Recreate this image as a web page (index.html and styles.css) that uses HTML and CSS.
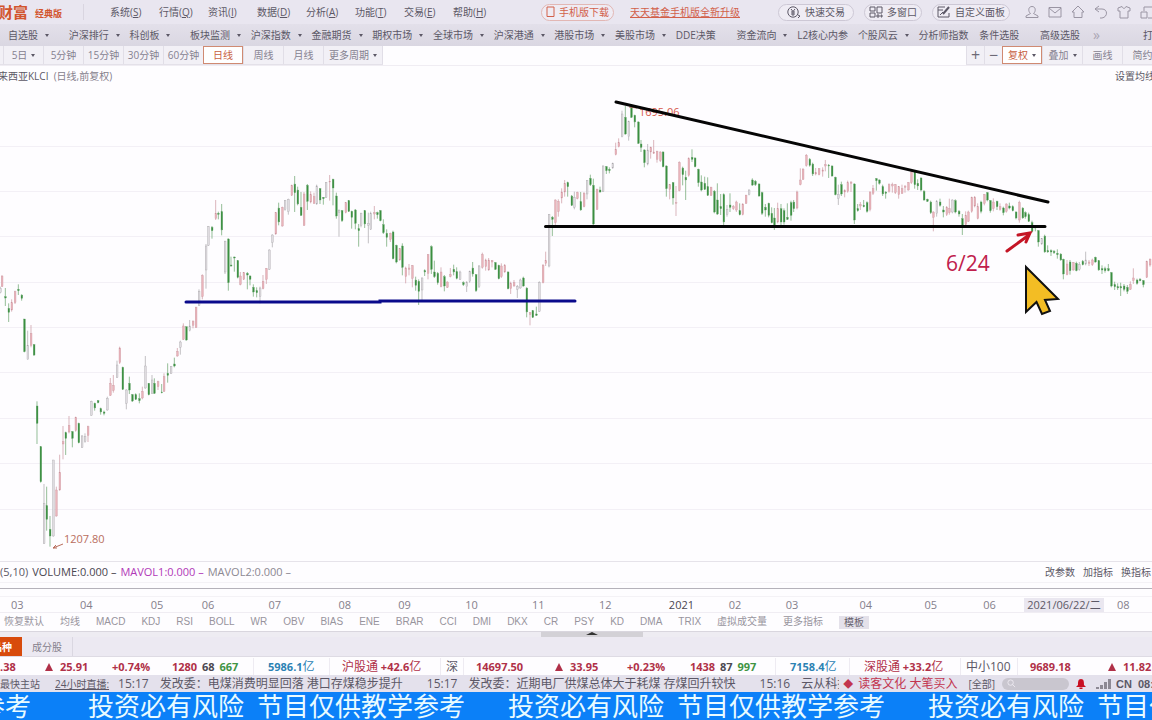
FILE: index.html
```html
<!DOCTYPE html>
<html lang="zh-CN">
<head>
<meta charset="utf-8">
<title>财富经典版 - KLCI</title>
<link rel="stylesheet" href="styles.css">
</head>
<body>
<div class="app">
  <header class="topbar">
    <div class="brand"><strong class="brand-name">财富</strong><span class="brand-edition">经典版</span></div>
    <nav class="menu">
      <button>系统(<u>S</u>)</button><button>行情(<u>Q</u>)</button><button>资讯(<u>I</u>)</button><button>数据(<u>D</u>)</button><button>分析(<u>A</u>)</button><button>功能(<u>T</u>)</button><button>交易(<u>E</u>)</button><button>帮助(<u>H</u>)</button>
    </nav>
    <div class="promo">
      <button class="pill pill-red"><svg class="ic-phone" viewBox="0 0 9 12"><path d="M1 1h7v9.500H1zM3 10.500h3"/></svg>手机版下载</button>
      <a class="promo-link" href="#">天天基金手机版全新升级</a>
    </div>
    <div class="actions">
      <button class="pill"><svg viewBox="0 0 14 12"><circle cx="6" cy="6" r="5.200"/><path d="M4 3l2 2.500L8 3M6 5.500V10M4 6h4M4 8h4M11 9l2 1-2 2"/></svg>快速交易</button>
      <button class="pill"><svg viewBox="0 0 14 12"><path d="M1 1h5v4H1zM8 1h5v6H8zM1 7h5v4H1zM8 9h2v2H8zM12 9h1v2h-1z"/></svg>多窗口</button>
      <button class="pill"><svg viewBox="0 0 14 12"><path d="M8 1H1v10h11V7M1 4h5M3 9l3-3"/><path class="thick" d="M6 8l6-7"/></svg>自定义面板</button>
    </div>
    <div class="tools">
      <button aria-label="用户"><svg viewBox="0 0 14 14"><path d="M7 1.500c-4 0-4 5-1.500 7L1 11v1.500h12V11L8.500 8.500C11 6.500 11 1.500 7 1.500z"/></svg></button>
      <button aria-label="邮件"><svg viewBox="0 0 14 14"><path d="M1 2.500h12v9.500H1zM1 3l6 5 6-5"/></svg></button>
      <button aria-label="主页"><svg viewBox="0 0 14 14"><path d="M7 1L1 7h2v5.500h8V7h2z"/></svg></button>
      <button aria-label="撤销"><svg viewBox="0 0 14 14"><path d="M5 1L1 4l4 3M1 4h7c6 0 6 8 0 9H6"/></svg></button>
      <button aria-label="皮肤"><svg viewBox="0 0 14 14"><path d="M5 1.500L1 3v3h2v7h8V6h2V3L9 1.500C8 4 6 4 5 1.500z"/></svg></button>
      <button aria-label="窗口"><svg viewBox="0 0 14 14"><path d="M4 6V2h9v11H8M1 7h6v6H1z"/></svg></button>
    </div>
  </header>

  <nav class="markets">
    <button class="drop">自选股</button><button class="drop">沪深排行</button><button class="drop">科创板</button><button class="drop">板块监测</button><button class="drop">沪深指数</button><button class="drop">金融期货</button><button class="drop">期权市场</button><button class="drop">全球市场</button><button class="drop">沪深港通</button><button class="drop">港股市场</button><button class="drop">美股市场</button><button>DDE决策</button><button class="drop">资金流向</button><button>L2核心内参</button><button class="drop">个股风云</button><button>分析师指数</button><button>条件选股</button><button>高级选股</button><button class="more">»</button><button>打开</button>
  </nav>

  <div class="periods">
    <div class="tabs">
      <button class="drop">5日</button><button>5分钟</button><button>15分钟</button><button>30分钟</button><button>60分钟</button><button class="active">日线</button><button>周线</button><button>月线</button><button class="drop wide">更多周期</button>
    </div>
    <div class="tabs tabs-right">
      <button class="zoom-btn">+</button><button class="zoom-btn">−</button><button class="drop active">复权</button><button class="drop">叠加</button><button>画线</button><button>简约</button>
    </div>
  </div>

  <main class="chart">
    <div class="chart-head"><span class="symbol">来西亚KLCI&nbsp; <small>(日线,前复权)</small></span><a href="#" class="setting">设置均线</a></div>
    <svg class="plot" viewBox="0 86 1152 475" role="img" aria-label="KLCI 日线">
      <g class="grid" id="grid"></g>
      <g id="candles"></g>
      <path class="tip" d="M63 544l-10 4m3-3l-3 3h4"/>
      <text class="low" x="64" y="543">1207.80</text>
      <text class="high" x="639" y="116">1695.06</text>
      <path class="tip" d="M637 108l-8-1"/>
      <path class="support" d="M186 302H380V301H575"/>
      <path class="trend" d="M616 102L1048 202M545.500 226.500H1045"/>
      <path class="arrow" d="M1007 251L1029 235M1018 235L1030 233L1026 242"/>
      <text class="mark" x="946" y="271">6/24</text>
      <path class="cursor" d="M1026 267L1058 299L1045 300L1050 311L1042 314L1036.500 302L1026 312Z"/>
    </svg>
  </main>

  <section class="volume">
    <div class="volume-head">
      <span>(5,10)</span><span class="vol">VOLUME:0.000 –</span><span class="ma1">MAVOL1:0.000 –</span><span class="ma2">MAVOL2:0.000 –</span>
      <span class="volume-links"><a href="#">改参数</a><a href="#">加指标</a><a href="#">换指标</a></span>
    </div>
  </section>
  <div class="axis">
    <span>03</span><span>04</span><span>05</span><span>06</span><span>07</span><span>08</span><span>09</span><span>10</span><span>11</span><span>12</span><span class="year">2021</span><span>02</span><span>03</span><span>04</span><span>05</span><span>06</span><span class="today">2021/06/22/二</span><span>08</span>
  </div>
  <nav class="indicators">
    <button>恢复默认</button><button>均线</button><button>MACD</button><button>KDJ</button><button>RSI</button><button>BOLL</button><button>WR</button><button>OBV</button><button>BIAS</button><button>ENE</button><button>BRAR</button><button>CCI</button><button>DMI</button><button>DKX</button><button>CR</button><button>PSY</button><button>KD</button><button>DMA</button><button>TRIX</button><button>虚拟成交量</button><button>更多指标</button><button class="template">模板</button>
  </nav>
  <div class="splitter"><button class="handle" aria-label="展开"><svg viewBox="0 0 12 4"><path d="M0 3L6 0l6 3z"/></svg></button></div>
  <div class="related"><button class="current"><span>品种</span></button><button>成分股</button></div>

  <div class="quotes">
    <b>.38</b>
    <b><i class="up"></i>25.91</b>
    <b>+0.74%</b>
    <b>1280 <em class="flat">68</em> <em class="down">667</em></b>
    <b class="sep amount">5986.1<span>亿</span></b>
    <b class="sep north"><span>沪股通</span> +42.6<span>亿</span></b>
    <b class="sep name">深</b>
    <b class="sep north">14697.50</b>
    <b><i class="up"></i>33.95</b>
    <b>+0.23%</b>
    <b>1438 <em class="flat">87</em> <em class="down">997</em></b>
    <b class="sep amount">7158.4<span>亿</span></b>
    <b class="sep amount red"><span>深股通</span> +33.2<span>亿</span></b>
    <b class="sep name">中小100</b>
    <b class="sep north">9689.18</b>
    <b><i class="up"></i>11.82</b>
  </div>

  <div class="news">
    <span class="station">最快主站</span>
    <a class="live" href="#">24小时直播:</a>
    <div class="ticker">
      <span class="item"><time>15:17</time>发改委：电煤消费明显回落 港口存煤稳步提升</span>
      <span class="item"><time>15:17</time>发改委：近期电厂供煤总体大于耗煤 存煤回升较快</span>
      <span class="item"><time>15:16</time>云从科技</span>
    </div>
    <span class="alert"><i>◆</i>读客文化 大笔买入</span>
    <span class="all">[全部]</span>
    <label class="search"><svg viewBox="0 0 10 10"><circle cx="4" cy="4" r="3"/><path d="M6 6l3 3"/></svg><input type="text" aria-label="搜索"></label>
    <svg class="bell" viewBox="0 0 10 10"><path d="M5 0C2 0 2 3 2 6L0 8h10L8 6C8 3 8 0 5 0zM3.500 8.500h3V10h-3z"/></svg>
    <svg class="signal" viewBox="0 0 15 10"><path d="M0 8h3v2H0zM4 6h3v4H4z"/><path d="M8 3h3v7H8zM12 0h3v10h-3z"/></svg>
    <b class="clock">CN&nbsp; 08:18</b>
  </div>

  <footer class="banner">
    <span class="banner-tail">学参考</span><span>投资必有风险&ensp;节目仅供教学参考</span><span>投资必有风险&ensp;节目仅供教学参考</span><span>投资必有风险&ensp;节目仅供教学参考</span>
  </footer>
</div>
<script src="chart.js"></script>
</body>
</html>
```
FILE: styles.css
```css
* { box-sizing: border-box; }
body {
  margin: 0;
  background: #fefdff;
  color: #5c5866;
  font: 10px/16px "Open Sans", "Noto Sans CJK SC", sans-serif;
  overflow: hidden;
}
button {
  border: 0;
  padding: 0;
  background: none;
  color: inherit;
  font: inherit;
  white-space: nowrap;
  text-align: left;
}
a { color: inherit; text-decoration: none; }
svg { fill: none; stroke: currentColor; flex: none; }
.app { display: flex; flex-direction: column; min-height: 100vh; white-space: nowrap; }

.topbar { display: flex; align-items: center; height: 24px; background: #e9e6f0; overflow: hidden; }
.brand { display: flex; align-items: center; gap: 7px; width: 84px; height: 16px; border-right: 1px solid #d9d5e0; color: #d2552e; }
.brand-name { font-size: 15px; margin-left: -2px; }
.brand-edition { font-size: 9px; font-weight: 700; padding-top: 4px; }
.menu { display: grid; grid-template-columns: repeat(8, 49px); margin-left: 26px; }
.promo { display: flex; align-items: center; gap: 16px; margin-left: 39px; color: #d2604a; }
.pill { display: flex; align-items: center; justify-content: center; gap: 4px; height: 17px; padding: 0 10px; border: 1px solid #cdc8d5; border-radius: 9px; background: #efecf4; }
.pill svg { width: 14px; height: 12px; }
.pill .ic-phone { width: 9px; }
.pill .thick { stroke-width: 2; }
.pill-red { padding: 0 4px; border-color: #e2b7b4; }
.promo-link { text-decoration: underline; }
.actions { display: flex; gap: 10px; margin-left: 38px; }
.actions .pill { padding: 0 4px; }
.actions .pill:first-child { padding: 0 8px; }
.tools { display: flex; justify-content: space-between; flex: 1; margin: 0 -2px 0 15px; color: #9a95a3; }
.tools svg { display: block; width: 14px; height: 14px; }

.markets { display: grid; grid-template-columns: repeat(17, minmax(0, 1fr)) 53px 50px 9px; align-items: center; height: 22px; padding-left: 8px; background: linear-gradient(#e3e0ea, #dad7e2); overflow: hidden; }
.more { font-size: 14px; color: #aaa5b3; }
.drop::after { content: ""; display: inline-block; margin-left: 7px; vertical-align: 2px; border: 2px solid transparent; border-top: 3px solid #5c5866; border-bottom: 0; }

.periods { display: flex; justify-content: space-between; height: 20px; border-bottom: 1px solid #f0edf3; color: #858190; overflow: hidden; }
.tabs { display: flex; height: 19px; padding-left: 3px; background: #f2f0f6; border-bottom: 1px solid #e4e1e9; }
.tabs button { width: 40px; border-left: 1px solid #e1dee7; text-align: center; }
.tabs .wide { width: 60px; border-right: 1px solid #e1dee7; }
.tabs .drop::after { margin-left: 4px; }
.tabs .active { border: 1px solid #d08a72; background: #fff; color: #c7603f; }
.tabs-right { padding: 0; margin-right: -10px; }
.tabs .zoom-btn { width: 18px; font-size: 16px; line-height: 16px; color: #6d6976; }

.chart-head { display: flex; justify-content: space-between; height: 20px; align-items: center; overflow: hidden; }
.symbol { margin-left: -2px; }
.symbol small { font-size: 10px; color: #85808c; }
.setting { margin-right: -3px; }
.plot { display: block; width: 100%; height: auto; font-size: 11px; }
.plot text { stroke: none; }
.grid { stroke: #f3f0f6; }
.candle { stroke-width: 1; }
.candle path { stroke-width: 2; }
.fall { stroke: #5f9f63; fill: #3a8f40; }
.rise { stroke: #c8929b; fill: #eab4bb; }
.hollow { stroke: #a4a2a6; fill: #dfdce0; }
.low, .high { fill: #b96e5d; }
.high { fill: #d75a4c; }
.tip { stroke: #b96e5d; }
.support { stroke: #0a0a8c; stroke-width: 3; stroke-linecap: round; }
.trend { stroke: #050505; stroke-width: 3; stroke-linecap: round; }
.arrow { stroke: #c41525; stroke-width: 3; stroke-linecap: round; }
.mark { fill: #c0204c; font-size: 21px; }
.cursor { fill: #f3bd24; stroke: #111; stroke-width: 2; }

.volume { height: 28px; border-top: 1px solid #e6e3ea; border-bottom: 1px solid #b5b2ba; }
.volume-head { display: flex; align-items: center; gap: 4px; height: 21px; border-bottom: 1px solid #f4f2f6; font-size: 11px; overflow: hidden; }
.vol { color: #4a4650; }
.ma1 { color: #b138b8; }
.ma2 { color: #8c8892; }
.volume-links { display: flex; gap: 8px; margin: 0 1px 0 auto; font-size: 10px; }
.axis { display: grid; grid-template-columns: 69fr 71fr 51fr 67fr 70fr 60fr 67fr 67fr 67fr 70fr 60fr 57fr 74fr 65fr 59fr 41fr 93fr 35fr; align-items: center; height: 17px; margin-top: 7px; padding-left: 11px; border-top: 1px solid #f4f2f6; border-bottom: 1px solid #f0edf3; color: #85808c; font-size: 11px; }
.axis span { min-width: 0; }
.axis .year { color: #4a4650; }
.axis .today { justify-self: start; padding: 0 3px; line-height: 14px; background: #eae7f0; color: #5c5866; }
.indicators { display: flex; align-items: center; gap: 16px; height: 18px; padding-left: 4px; color: #98949d; font-family: "Liberation Sans", "Noto Sans CJK SC", sans-serif; }
.template { padding: 0 5px; line-height: 13px; background: #e4e1ea; color: #68636f; }
.splitter { display: flex; justify-content: center; height: 6px; padding-left: 32px; background: #eeecf2; border-top: 1px solid #d9d6de; }
.handle { display: flex; justify-content: center; width: 102px; background: #d3d1d6; }
.handle svg { width: 12px; height: 4px; fill: #333; stroke: none; }
.related { display: flex; height: 20px; background: #ece9f2; border-bottom: 1px solid #dedbe4; color: #85808c; }
.related button { width: 51px; text-align: center; border-right: 1px solid #dad7e1; }
.related .current { width: 22px; overflow: hidden; background: #d84b0c; color: #fff; border: 0; font-weight: 700; }
.current span { display: flex; justify-content: flex-end; width: 12px; }

.quotes { display: grid; grid-template-columns: 45fr 67fr 60fr 81fr 76fr 111fr 23fr 92fr 72fr 63fr 85fr 74fr 111fr 57fr 91fr 44fr; align-items: center; height: 18px; color: #b03048; font-size: 11px; line-height: 17px; overflow: hidden; }
.quotes b { min-width: 0; }
.quotes b span { font-weight: 400; font-size: 12px; }
.quotes em { margin-left: 2px; font-style: normal; }
.flat { color: #4c4852; }
.down { color: #3f9443; }
.up { display: inline-block; margin-right: 7px; border: 4px solid transparent; border-bottom: 8px solid #b03048; border-top: 0; }
.quotes .sep { border-left: 1px solid #eeebf2; }
.amount { color: #2c82b4; padding-left: 14px; }
.red { color: inherit; }
.north { padding-left: 12px; }
.quotes .name { padding-left: 5px; font-weight: 400; font-size: 12px; color: #5c5866; }

.news { display: flex; align-items: center; height: 17px; background: #e4e1ec; overflow: hidden; }
.live { margin-left: 15px; text-decoration: underline; }
.ticker { display: flex; gap: 24px; flex: 1; min-width: 0; margin-left: 9px; font-size: 12px; overflow: hidden; }
.item { flex: none; }
.item time { margin-right: 11px; }
.alert { margin-left: 4px; color: #c2354f; font-size: 12px; }
.alert i { margin-right: 5px; font-size: 10px; font-style: normal; }
.all { margin: 0 7px 0 11px; }
.search { display: flex; align-items: center; width: 67px; height: 12px; padding: 0 5px; border-radius: 6px; background: #c9c6cf; color: #eeebf2; }
.search svg { width: 9px; height: 9px; }
.search input { width: 100%; min-width: 0; height: 10px; padding: 0; border: 0; background: none; }
.bell { width: 10px; height: 10px; margin: 0 10px 0 7px; fill: #c80f22; stroke: none; }
.signal { width: 15px; height: 10px; fill: #8d8994; stroke: none; }
.clock { width: 36px; margin-left: 5px; font: 700 11px/16px "Liberation Sans", sans-serif; overflow: hidden; }

.banner { display: flex; flex: 1; align-items: center; min-height: 28px; background: #0b80f8; color: #e9fbff; font-size: 26px; line-height: 28px; overflow: hidden; }
.banner span { flex: none; width: 420px; }
.banner .banner-tail { display: flex; justify-content: flex-end; width: 88px; padding-right: 57px; }
```
FILE: chart.js
```js
// Each group: origin x, origin y, then candles as "x high open close low kind" in thirds of a pixel.
// g = falling, r = rising, w = hollow.
const groups = [
  [0, 260, `1 80 85 98 100 w|6 46 48 80 80 r|16 84 110 114 138 g|26 130 145 157 186 g|35 118 128 150 155 r|45 92 95 128 132 r|55 73 88 92 105 g|65 103 105 115 122 g|73 177 177 275 277 g|83 212 256 298 298 w|93 195 220 256 262 r|102 252 254 285 288 g|111 424 438 490 552 g|122 560 560 665 668 g|132 672 730 850 852 w|140 680 737 778 812 g|150 768 808 828 860 g|160 600 600 828 830 w|169 680 690 768 770 r|179 584 637 690 692 r|189 498 545 552 598 r|197 515 518 535 585 g|207 468 496 516 520 r|217 513 515 535 562 g|227 470 472 512 515 r|236 488 490 548 550 g|246 525 528 562 564 w|255 520 530 545 548 w|264 497 500 526 546 r|274 422 424 466 467 w|284 428 430 444 452 g|294 420 422 428 430 g|302 443 446 456 464 g|312 452 456 460 466 g|322 410 415 450 452 w|331 354 370 406 408 r|340 345 376 392 398 r|351 302 315 352 354 w|359 260 264 308 312 r|368 320 322 388 390 g|379 388 390 430 448 w|388 350 370 390 402 g|397 402 404 423 426 g|407 400 404 418 420 g|418 400 416 422 430 g|427 380 394 414 418 r|436 288 318 384 386 w|446 369 370 404 406 g|456 345 360 400 402 w|463 355 370 400 402 g|474 362 365 380 390 r|485 372 396 398 400 g|492 340 350 394 396 r|503 310 340 346 368 g|513 318 320 340 342 w|523 293 312 318 322 g|532 264 274 288 290 r|541 242 246 262 284 w|550 190 198 238 240 r|559 200 200 240 242 g|569 180 198 212 214 w|579 182 183 196 205 r|588 140 142 202 204 r`],
  [170, 160, `87 388 394 436 438 w|97 343 347 410 418 r|108 252 258 330 386 w|115 198 200 256 258 w|126 198 202 212 236 g|137 120 160 176 180 r|145 155 160 163 178 g|155 132 155 210 226 g|165 242 244 336 342 w|175 235 237 368 392 g|183 290 315 318 320 g|193 290 291 294 335 g|203 300 302 352 355 g|211 336 348 374 376 r|221 336 338 358 360 r|232 336 340 345 388 g|240 346 348 358 376 g|250 373 382 396 410 g|260 382 392 398 412 g|270 380 384 410 430 w|279 345 364 386 388 r|289 324 326 358 372 r|298 268 270 328 330 w|307 223 225 248 262 w|317 156 158 222 224 r|326 128 144 186 196 g|337 140 142 198 200 r|345 120 122 148 152 w|355 116 118 155 164 w|365 74 76 106 108 r|374 48 72 98 156 g|383 80 90 132 136 g|393 96 142 166 168 g|402 96 102 196 198 r|412 72 76 124 150 g|422 94 104 126 130 r|432 98 110 130 132 r|440 74 78 132 134 w|450 84 86 120 132 g|460 112 112 116 134 g|468 66 68 112 114 w|479 45 64 66 122 r|489 56 58 84 136 g|499 98 108 168 176 g|507 148 152 158 230 w|516 150 152 182 186 g|527 126 128 158 160 r|536 120 122 154 156 g|545 152 154 172 206 g|556 147 150 190 208 g|566 192 206 212 260 g|573 158 160 196 202 w|584 150 152 192 204 g|595 158 190 196 250 w|602 155 160 208 210 w`],
  [370, 180, `13 78 98 102 118 r|22 95 98 104 116 g|31 90 92 122 124 g|40 118 134 158 162 g|50 148 160 172 200 g|61 158 160 178 186 r|69 152 156 236 238 g|79 194 196 246 250 g|89 204 206 240 242 r|97 190 198 262 286 g|107 260 264 290 310 r|117 252 264 268 286 r|127 255 257 295 322 r|137 290 300 316 332 g|146 298 304 334 375 g|156 292 294 330 362 w|164 268 272 276 288 g|174 222 224 280 298 r|184 196 200 268 282 g|193 242 276 290 294 g|203 276 280 308 314 g|213 262 276 320 322 r|223 285 290 318 334 g|232 304 306 322 324 r|241 264 284 290 292 r|251 254 268 276 286 g|260 262 275 295 298 g|270 272 276 298 300 w|280 304 308 314 318 g|290 304 306 320 336 w|299 272 274 304 308 w|308 246 264 282 290 g|318 282 284 332 336 g|327 255 258 320 324 w|337 218 224 262 266 r|347 236 240 260 272 r|356 234 240 270 272 r|366 240 242 246 262 r|376 246 248 268 270 g|386 254 256 296 298 g|394 250 258 290 294 r|404 252 256 276 278 r|414 274 276 326 328 g|422 305 310 326 342 r|432 300 308 318 320 r|442 315 320 328 354 w|451 296 300 324 326 w|460 290 294 318 320 g|470 322 324 396 412 g|480 396 398 404 436 r|488 390 392 412 414 g|499 380 402 406 408 g|508 304 308 394 396 w|519 252 256 308 310 r|527 215 242 250 258 r|537 102 104 258 262 w|547 108 112 118 168 g`],
  [540, 90, `46 328 330 398 405 r|55 328 334 365 380 r|65 295 306 324 340 r|74 270 280 306 320 r|83 275 278 290 320 g|95 315 318 346 348 g|103 305 322 352 358 w|112 305 308 326 328 r|122 306 335 360 362 g|132 306 310 350 352 r|141 270 272 312 328 w|151 254 265 284 288 g|160 266 286 402 406 g|171 296 298 358 360 r|180 290 300 306 308 g|189 226 228 304 306 w|199 228 230 242 252 g|208 232 238 242 250 g|218 218 220 234 236 w|227 158 178 194 196 r|236 145 158 170 172 r|246 62 72 140 142 w|256 48 82 132 134 g|266 92 95 140 152 w|274 42 52 82 84 g|284 74 76 96 112 g|295 94 96 160 162 g|303 150 162 172 186 g|313 178 180 218 232 g|323 162 180 222 226 w|332 170 172 186 206 r|341 150 186 190 192 r|351 182 184 208 218 r|361 184 186 212 216 r|369 184 186 230 232 g|379 226 228 296 320 g|389 282 284 298 328 r|399 276 278 324 344 g|408 288 338 340 378 r|418 214 218 302 304 r|428 230 234 254 286 g|437 242 262 270 330 g|446 202 206 256 260 r|456 178 202 208 216 g|465 202 204 230 232 g|475 236 238 278 290 g|484 256 276 300 304 g|494 260 280 298 300 g|503 262 290 316 318 g|513 290 292 316 318 r|523 300 304 366 370 g|532 280 330 372 375 g|542 312 350 356 375 g|551 310 314 396 405 g|561 345 358 374 380 w|570 310 345 352 366 g|580 345 350 356 360 r|589 332 336 360 366 r|599 340 362 374 376 g|608 340 342 374 376 r|618 314 316 340 342 r|627 298 300 314 316 w`],
  [740, 130, `37 145 150 165 168 g|46 150 154 164 168 g|57 160 162 198 200 g|66 185 188 250 255 g|76 222 232 240 260 g|86 218 220 256 262 g|95 232 250 278 280 g|103 234 264 292 300 g|113 218 236 276 280 r|123 222 236 276 290 g|132 235 242 276 284 g|142 220 262 268 270 g|153 212 218 256 272 g|161 210 216 236 246 g|171 182 186 234 238 r|181 115 150 164 166 r|189 114 118 148 150 r|199 72 76 106 110 r|209 84 88 106 110 g|218 98 102 132 138 g|227 114 128 132 136 r|237 115 116 134 136 r|248 112 120 124 140 r|256 90 104 108 124 r|266 102 106 108 144 g|276 106 108 138 140 g|286 140 142 194 196 g|295 164 194 206 225 w|304 155 164 192 198 g|314 178 182 186 202 r|323 152 158 184 188 r|333 154 156 160 186 r|343 160 162 270 282 g|353 222 236 242 245 g|361 216 224 228 240 r|371 210 226 230 232 g|381 214 218 244 248 g|390 184 186 238 244 r|399 165 176 190 195 r|409 144 146 152 182 g|418 148 150 160 164 g|428 164 170 192 198 g|437 184 186 190 206 g|447 160 164 184 188 r|457 158 164 168 188 r|466 162 164 188 192 r|476 168 170 194 206 r|486 164 176 190 192 r|495 166 168 172 188 r|505 156 158 180 182 r|514 122 126 158 162 r|524 122 124 164 176 g|533 148 160 168 180 g|543 142 144 180 184 g|552 180 184 210 212 g|562 206 208 214 216 g|572 212 216 248 252 g|580 244 246 262 304 r|590 210 215 250 260 w|600 206 216 226 230 g|610 228 240 246 262 g|620 228 232 254 258 r`],
  [900, 150, `148 146 176 188 194 r|157 148 150 186 190 w|166 148 152 186 190 g|177 180 184 192 200 g|187 192 206 226 255 g|197 184 196 224 226 r|205 182 186 214 216 r|215 140 142 184 188 r|224 138 142 168 172 r|233 160 170 206 208 r|243 152 156 184 190 g|253 132 134 160 166 r|262 126 128 150 154 g|271 150 152 182 188 g|280 145 156 176 184 r|291 152 154 170 180 g|300 160 170 178 182 r|310 170 174 188 196 g|319 160 162 184 188 r|328 158 168 174 178 g|338 166 170 182 184 g|348 184 186 204 208 g|358 152 158 210 218 r|368 172 174 204 206 g|376 184 188 200 206 g|386 188 194 214 216 g|396 212 218 244 248 g|406 226 230 234 244 g|415 240 242 276 290 g|425 264 266 282 284 w|434 254 258 306 308 g|443 286 302 306 308 g|453 298 302 306 318 g|462 300 304 308 312 g|472 298 310 314 326 g|482 310 312 330 332 g|490 326 328 372 388 g|501 330 342 374 376 r|510 330 336 362 374 g|520 336 338 360 362 r|529 335 340 362 364 g|538 336 344 358 362 w|548 330 334 344 346 g|557 305 330 342 346 w|567 330 336 340 348 r|577 326 330 344 348 r|586 320 322 336 338 g|596 330 332 360 362 g|606 346 356 360 372 g|615 350 356 362 368 g|625 342 356 362 364 g|634 366 368 408 412 g|644 395 404 410 420 g|653 400 410 414 420 g|662 398 410 414 438 g|672 402 408 418 424 g|682 405 412 424 432 g|691 394 404 418 420 r|700 355 384 392 402 r|711 386 390 400 404 g|720 384 388 392 394 g|730 390 392 404 412 g|740 332 334 382 384 r|750 325 328 345 350 r`]
];
const kinds = { g: "fall", r: "rise", w: "hollow" };

document.getElementById("candles").innerHTML = groups.map(([ox, oy, data]) =>
  `<g transform="translate(${ox} ${oy}) scale(0.33333)">` +
  data.split("|").map(row => {
    const [x, high, top, bottom, low, kind] = row.split(" ");
    return `<g class="candle ${kinds[kind]}"><path d="M${x} ${high}V${low}"/><rect x="${x - 2}" y="${top}" width="5" height="${Math.max(2, bottom - top)}"/></g>`;
  }).join("") + "</g>").join("");

document.getElementById("grid").innerHTML =
  [147, 192, 237, 283, 328, 373, 419, 464, 510].map(y => `<path d="M0 ${y - 0.5}H1152"/>`).join("");
```
